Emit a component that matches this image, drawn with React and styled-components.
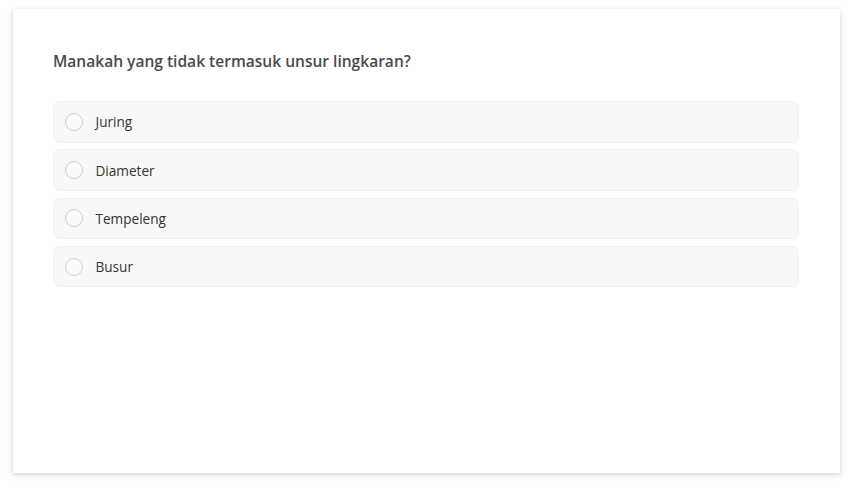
import React from "react";
import styled, { createGlobalStyle } from "styled-components";

const Global = createGlobalStyle`
  html, body { margin: 0; padding: 0; background: #ffffff; }
  body { font-family: "Open Sans", "Noto Sans", sans-serif; }
  * { box-sizing: border-box; }
`;

const Page = styled.div`
  width: 852px;
  height: 489px;
  padding: 9px 12px 16px 13px;
  background: #ffffff;
`;

const Card = styled.div`
  width: 827px;
  height: 464px;
  background: #ffffff;
  box-shadow: 0 2px 6px rgba(0, 0, 0, 0.16), 0 0 2px rgba(0, 0, 0, 0.06);
  padding: 40px 41px 40px 40px;
  display: flex;
  flex-direction: column;
`;

const Question = styled.h2`
  margin: 0 0 28px 0;
  font-size: 15.55px;
  line-height: 24px;
  font-weight: 600;
  color: #4a4a4a;
`;

const Options = styled.div`
  display: flex;
  flex-direction: column;
  gap: 6.8px;
`;

const Option = styled.label`
  display: flex;
  align-items: center;
  gap: 12.5px;
  height: 41.5px;
  padding: 0 11px;
  background: #f8f8f8;
  border: 1px solid #f2f2f2;
  border-radius: 7px;
  cursor: pointer;
`;

const Radio = styled.span`
  width: 18px;
  height: 18px;
  border-radius: 50%;
  border: 1px solid #cfcfcf;
  background: #fafafa;
  flex: none;
`;

const Label = styled.span`
  font-size: 13.6px;
  color: #333333;
`;

const options = ["Juring", "Diameter", "Tempeleng", "Busur"];

export default function App() {
  return (
    <>
      <Global />
      <Page>
        <Card>
          <Question>Manakah yang tidak termasuk unsur lingkaran?</Question>
          <Options>
            {options.map((o) => (
              <Option key={o}>
                <Radio />
                <Label>{o}</Label>
              </Option>
            ))}
          </Options>
        </Card>
      </Page>
    </>
  );
}
